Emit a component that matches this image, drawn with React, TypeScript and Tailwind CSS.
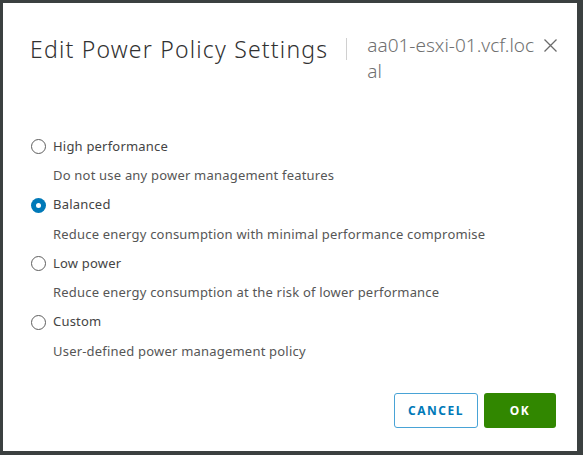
import React, { useState } from 'react';

const options = [
  { id: 'high', label: 'High performance', desc: 'Do not use any power management features' },
  { id: 'balanced', label: 'Balanced', desc: 'Reduce energy consumption with minimal performance compromise' },
  { id: 'low', label: 'Low power', desc: 'Reduce energy consumption at the risk of lower performance' },
  { id: 'custom', label: 'Custom', desc: 'User-defined power management policy' },
];

const Radio: React.FC<{ checked: boolean }> = ({ checked }) =>
  checked ? (
    <span className="w-[15px] h-[15px] rounded-full bg-[#0079b8] flex items-center justify-center shrink-0">
      <span className="w-[5px] h-[5px] rounded-full bg-white" />
    </span>
  ) : (
    <span className="w-[15px] h-[15px] rounded-full border border-[#5e5e5e] bg-white shrink-0" />
  );

export default function App() {
  const [selected, setSelected] = useState('balanced');

  return (
    <div
      className="w-[583px] h-[455px] bg-[#3b4040] pt-[3px] pl-[3px] pr-[6px] pb-[4px]"
      style={{ fontFamily: '"Noto Sans", sans-serif' }}
    >
      <div className="w-full h-full bg-white flex flex-col">
        {/* Header */}
        <div className="flex items-start pl-[27px] pr-[19px] pt-[29px]">
          <h1 className="text-[23px] font-light text-[#313131] leading-[32px] mt-[1px] tracking-[1.2px] whitespace-nowrap">
            Edit Power Policy Settings
          </h1>
          <div className="w-px h-[22px] bg-[#d0d0d0] ml-[18px] mt-[6px] shrink-0" />
          <div className="ml-[20px] w-[168px] text-[19px] font-light text-[#707070] leading-[26px] break-all">
            aa01-esxi-01.vcf.local
          </div>
          <button className="ml-auto mt-[6px] text-[#6b6b6b]">
            <svg width="15" height="15" viewBox="0 0 15 15" fill="none" stroke="currentColor" strokeWidth="1.3">
              <path d="M1.5 1.5l12 12M13.5 1.5l-12 12" />
            </svg>
          </button>
        </div>

        {/* Options */}
        <div className="flex flex-col pl-[28px] mt-[48px]">
          {options.map((o) => (
            <div key={o.id} className="flex flex-col">
              <label
                className="flex items-center gap-[7px] h-[29px] cursor-pointer"
                onClick={() => setSelected(o.id)}
              >
                <Radio checked={selected === o.id} />
                <span className="text-[13px] text-[#444] tracking-[0.2px]">{o.label}</span>
              </label>
              <div className="pl-[22px] h-[29.5px] flex items-center text-[13px] text-[#565656] tracking-[0.2px]">
                {o.desc}
              </div>
            </div>
          ))}
        </div>

        {/* Footer */}
        <div className="mt-auto flex justify-end gap-[6px] pr-[21px] pb-[23px]">
          <button className="w-[84px] h-[35px] rounded-[3px] border border-[#49a3d6] text-[#0079b8] text-[12px] font-bold tracking-[1.5px]">
            CANCEL
          </button>
          <button className="w-[72px] h-[35px] rounded-[3px] bg-[#318700] text-white text-[12px] font-bold tracking-[1.5px]">
            OK
          </button>
        </div>
      </div>
    </div>
  );
}
